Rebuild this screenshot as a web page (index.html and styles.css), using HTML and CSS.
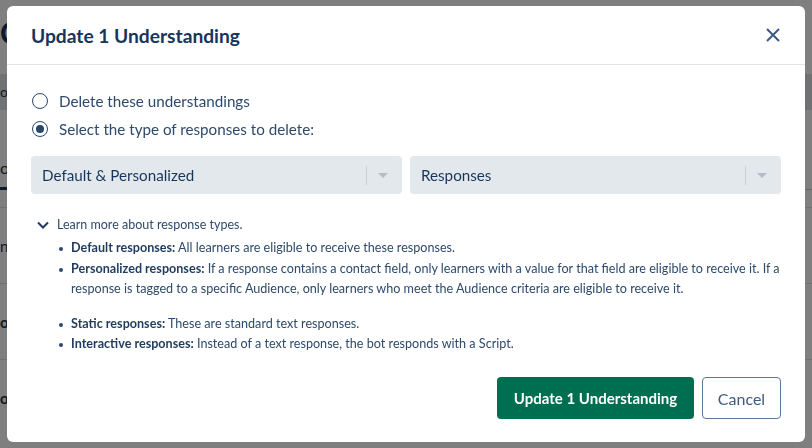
FILE: index.html
```html
<!DOCTYPE html>
<html lang="en">
<head>
    <meta charset="UTF-8">
    <meta name="viewport" content="width=device-width, initial-scale=1.0">
    <title>Update 1 Understanding</title>
    <link rel="stylesheet" href="styles.css">
</head>
<body>
    <!-- page behind the dialog -->
    <div class="page">
        <div class="page-title">C</div>
        <div class="page-toolbar">o</div>
        <div class="page-tabs"><span class="tab">of</span></div>
        <div class="page-row">n</div>
        <div class="page-row bold">o</div>
        <div class="page-row bold">o</div>
    </div>

    <div class="overlay">
        <div class="modal">
            <div class="modal-header">
                <h2 class="modal-title">Update 1 Understanding</h2>
                <button class="close-btn" aria-label="Close">
                    <svg width="14" height="14" viewBox="0 0 14 14">
                        <path d="M1 1 L13 13 M13 1 L1 13" stroke="#3d5a80" stroke-width="2" fill="none"/>
                    </svg>
                </button>
            </div>

            <div class="modal-body">
                <label class="radio-row">
                    <span class="radio"></span>
                    Delete these understandings
                </label>
                <label class="radio-row">
                    <span class="radio checked"></span>
                    Select the type of responses to delete:
                </label>

                <div class="selects">
                    <div class="select">
                        <span class="select-value">Default &amp; Personalized</span>
                        <span class="select-sep"></span>
                        <span class="select-arrow"></span>
                    </div>
                    <div class="select">
                        <span class="select-value">Responses</span>
                        <span class="select-sep"></span>
                        <span class="select-arrow"></span>
                    </div>
                </div>

                <div class="learn-more">
                    <svg width="12" height="8" viewBox="0 0 12 8">
                        <path d="M1 1.5 L6 6.5 L11 1.5" stroke="#1f3b5e" stroke-width="2" fill="none"/>
                    </svg>
                    Learn more about response types.
                </div>
                <ul class="types">
                    <li><b>Default responses:</b> All learners are eligible to receive these responses.</li>
                    <li><b>Personalized responses:</b> If a response contains a contact field, only learners with a value for that field are eligible to receive it. If a response is tagged to a specific Audience, only learners who meet the Audience criteria are eligible to receive it.</li>
                </ul>
                <ul class="types">
                    <li><b>Static responses:</b> These are standard text responses.</li>
                    <li><b>Interactive responses:</b> Instead of a text response, the bot responds with a Script.</li>
                </ul>
            </div>

            <div class="modal-footer">
                <button class="btn btn-primary">Update 1 Understanding</button>
                <button class="btn btn-secondary">Cancel</button>
            </div>
        </div>
    </div>
</body>
</html>
```

FILE: styles.css
```css
* {
    margin: 0;
    padding: 0;
    box-sizing: border-box;
}
body {
    font-family: "Lato", "Open Sans", sans-serif;
    background: #ffffff;
    color: #2d4a6b;
    height: 100vh;
    overflow: hidden;
}

/* page underneath */
.page {
    padding-top: 14px;
    color: #1a3557;
}
.page-title {
    font-size: 30px;
    font-weight: 700;
    height: 60px;
}
.page-toolbar {
    background: #dfe3e7;
    height: 36px;
    line-height: 36px;
    font-size: 14px;
    margin-bottom: 44px;
}
.page-tabs {
    border-bottom: 1px solid #cccccc;
    height: 36px;
}
.tab {
    display: inline-block;
    font-size: 16px;
    height: 36px;
    line-height: 28px;
    border-bottom: 3px solid #1a3557;
    padding-right: 20px;
}
.page-row {
    height: 76px;
    line-height: 76px;
    font-size: 15px;
    border-top: 1px solid #e3e3e3;
}
.page-tabs + .page-row { margin-top: 17px; }
.page-row.bold { font-weight: 700; }

.overlay {
    position: fixed;
    inset: 0;
    background: rgba(0, 0, 0, 0.5);
    display: flex;
    align-items: center;
    justify-content: center;
}
.modal {
    width: 798px;
    height: 436px;
    background: #ffffff;
    border-radius: 6px;
    display: flex;
    flex-direction: column;
}
.modal-header {
    height: 59px;
    display: flex;
    align-items: center;
    justify-content: space-between;
    padding: 0 25px 0 24px;
    border-bottom: 1px solid #e3e3e3;
}
.modal-title {
    font-size: 19.2px;
    font-weight: 700;
    color: #17355a;
}
.close-btn {
    background: none;
    border: none;
    width: 14px;
    height: 14px;
    display: flex;
    cursor: pointer;
}

.modal-body {
    padding: 22px 24px 0;
}
.radio-row {
    display: flex;
    align-items: center;
    height: 28px;
    font-size: 15.2px;
    color: #2d4a6b;
}
.radio {
    width: 16px;
    height: 16px;
    border: 1.5px solid #27466a;
    border-radius: 50%;
    margin: 0 11px 0 1px;
    display: flex;
    align-items: center;
    justify-content: center;
}
.radio.checked::after {
    content: "";
    width: 8px;
    height: 8px;
    border-radius: 50%;
    background: #27466a;
}

.selects {
    display: grid;
    grid-template-columns: 1fr 1fr;
    gap: 8px;
    margin-top: 13px;
}
.select {
    height: 38px;
    background: #e3e8ec;
    border-radius: 4px;
    display: flex;
    align-items: center;
    padding: 0 14px 0 11px;
    font-size: 15.2px;
    color: #17355a;
}
.select-value { flex: 1; }
.select-sep {
    width: 1px;
    height: 19px;
    background: #c9cfd5;
    margin-right: 11px;
}
.select-arrow {
    width: 0;
    height: 0;
    border-left: 5px solid transparent;
    border-right: 5px solid transparent;
    border-top: 5px solid #b5bcc4;
}

.learn-more {
    display: flex;
    align-items: center;
    gap: 8px;
    margin-top: 21px;
    padding-left: 6px;
    font-size: 12.5px;
    line-height: 20px;
    color: #2d4a6b;
}
.types {
    list-style: none;
    padding-left: 40px;
    margin-top: 3px;
    font-size: 12.6px;
    line-height: 20.5px;
    color: #2d4a6b;
}
.types + .types { margin-top: 14px; }
.types li { position: relative; }
.types li::before {
    content: "";
    position: absolute;
    left: -12px;
    top: 9px;
    width: 4px;
    height: 4px;
    border-radius: 50%;
    background: #2d4a6b;
}
.types b { color: #1f3b5e; }

.modal-footer {
    margin-top: auto;
    display: flex;
    justify-content: flex-end;
    gap: 8px;
    padding: 0 24px 23px;
}
.btn {
    height: 42px;
    border-radius: 4px;
    font-family: inherit;
    font-size: 16px;
    cursor: pointer;
}
.btn-primary {
    width: 197px;
    background: #006e51;
    border: none;
    color: #ffffff;
    font-weight: 700;
    font-size: 15px;
}
.btn-secondary {
    width: 79px;
    background: #ffffff;
    border: 1px solid #5b7899;
    color: #3d5a80;
}
```
